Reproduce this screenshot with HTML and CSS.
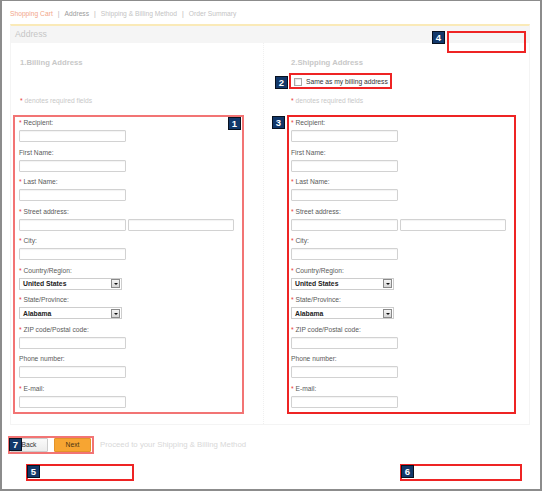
FILE: index.html
```html
<!DOCTYPE html>
<html lang="en">
<head>
    <meta charset="UTF-8">
    <meta name="viewport" content="width=device-width, initial-scale=1.0">
    <title>Checkout - Address</title>
    <link rel="stylesheet" href="styles.css">
</head>
<body>
    <div class="frame">
        <!-- Pasos -->
        <div class="crumbs">
            <span class="step done">Shopping Cart</span><span class="sep">|</span><span class="step current">Address</span><span class="sep">|</span><span class="step">Shipping &amp; Billing Method</span><span class="sep">|</span><span class="step">Order Summary</span>
        </div>

        <div class="panel">
            <div class="panel-head">Address</div>
            <div class="panel-body">
                <!-- Facturación -->
                <div class="col col-bill">
                    <div class="title">1.Billing Address</div>
                    <div class="same-spacer"></div>
                    <div class="req"><span class="star">*</span> denotes required fields</div>
                    <div class="fields mark mark-soft">
                        <span class="badge badge-1">1</span>
                        <div class="field"><label><span class="star">*</span> Recipient:</label><input type="text"></div>
                        <div class="field"><label>First Name:</label><input type="text"></div>
                        <div class="field"><label><span class="star">*</span> Last Name:</label><input type="text"></div>
                        <div class="field"><label><span class="star">*</span> Street address:</label><div class="pair"><input type="text"><input type="text" class="wide"></div></div>
                        <div class="field"><label><span class="star">*</span> City:</label><input type="text"></div>
                        <div class="field"><label><span class="star">*</span> Country/Region:</label><div class="select"><span>United States</span><i class="arrow"></i></div></div>
                        <div class="field"><label><span class="star">*</span> State/Province:</label><div class="select"><span>Alabama</span><i class="arrow"></i></div></div>
                        <div class="field"><label><span class="star">*</span> ZIP code/Postal code:</label><input type="text"></div>
                        <div class="field"><label>Phone number:</label><input type="text"></div>
                        <div class="field"><label><span class="star">*</span> E-mail:</label><input type="text"></div>
                    </div>
                </div>

                <!-- Envío -->
                <div class="col col-ship">
                    <div class="title">2.Shipping Address</div>
                    <div class="same-box mark">
                        <span class="badge badge-2">2</span>
                        <span class="check"></span>
                        <span>Same as my billing address</span>
                    </div>
                    <div class="req"><span class="star">*</span> denotes required fields</div>
                    <div class="fields mark">
                        <span class="badge badge-3">3</span>
                        <div class="field"><label><span class="star">*</span> Recipient:</label><input type="text"></div>
                        <div class="field"><label>First Name:</label><input type="text"></div>
                        <div class="field"><label><span class="star">*</span> Last Name:</label><input type="text"></div>
                        <div class="field"><label><span class="star">*</span> Street address:</label><div class="pair"><input type="text"><input type="text" class="wide"></div></div>
                        <div class="field"><label><span class="star">*</span> City:</label><input type="text"></div>
                        <div class="field"><label><span class="star">*</span> Country/Region:</label><div class="select"><span>United States</span><i class="arrow"></i></div></div>
                        <div class="field"><label><span class="star">*</span> State/Province:</label><div class="select"><span>Alabama</span><i class="arrow"></i></div></div>
                        <div class="field"><label><span class="star">*</span> ZIP code/Postal code:</label><input type="text"></div>
                        <div class="field"><label>Phone number:</label><input type="text"></div>
                        <div class="field"><label><span class="star">*</span> E-mail:</label><input type="text"></div>
                    </div>
                </div>
            </div>
        </div>

        <!-- Botones -->
        <div class="actions">
            <div class="btn-box mark mark-soft">
                <span class="badge badge-7">7</span>
                <button type="button" class="btn btn-back">Back</button>
                <button type="button" class="btn btn-next">Next</button>
            </div>
            <span class="hint">Proceed to your Shipping &amp; Billing Method</span>
        </div>

        <div class="slots">
            <div class="slot slot-5 mark"><span class="badge badge-5">5</span></div>
            <div class="slot slot-6 mark"><span class="badge badge-6">6</span></div>
        </div>

        <div class="slot-4 mark"><span class="badge badge-4">4</span></div>
    </div>
</body>
</html>
```

FILE: styles.css
```css
/* Base */
body {
    margin: 0;
    background: #fff;
    font-family: 'Liberation Sans', Arial, sans-serif;
    color: #555;
}

.frame {
    position: relative;
    box-sizing: border-box;
    width: 542px;
    height: 491px;
    border: 2px solid #8c8c8c;
    border-top-width: 1px;
    overflow: hidden;
}

/* Pasos */
.crumbs {
    box-sizing: border-box;
    height: 23px;
    padding: 8px 0 0 8px;
    font-size: 6.7px;
    line-height: 10px;
    color: #c4c4c4;
}

.crumbs .done {
    color: #f2a68a;
}

.crumbs .current {
    color: #9a9a9a;
}

.crumbs .sep {
    margin: 0 5px;
    color: #b4b4b4;
}

/* Panel */
.panel {
    margin-left: 8px;
    width: 520px;
    box-sizing: border-box;
    border: 1px solid #f4f4f4;
    border-top: 2px solid #faeab8;
}

.panel-head {
    height: 17px;
    line-height: 17px;
    padding-left: 4px;
    background: #f5f5f5;
    font-size: 8.7px;
    color: #c6c6c6;
}

.panel-body {
    display: flex;
}

.col {
    padding-bottom: 10px;
}

.col-bill {
    width: 252px;
    border-right: 1px dotted #f0f0f0;
}

.col-ship {
    flex: 1;
}

.title {
    margin-top: 15px;
    line-height: 10px;
    font-size: 7.7px;
    font-weight: bold;
    color: #c8c8c8;
}

.col-bill .title,
.col-bill .req {
    padding-left: 9px;
}

.col-ship .title,
.col-ship .req {
    padding-left: 27px;
}

.same-spacer {
    margin-top: 5px;
    height: 16px;
}

.req {
    margin-top: 7px;
    line-height: 10px;
    font-size: 6.7px;
    color: #c8c8c8;
}

.star {
    color: #e83a3a;
}

/* Marcas rojas */
.mark {
    position: relative;
    box-sizing: border-box;
    border: 2px solid #ee2424;
}

.mark-soft {
    border-color: #f27474;
}

.badge {
    position: absolute;
    width: 11px;
    height: 11px;
    border: 1px solid #08111f;
    background: #12386a;
    color: #fff;
    font-size: 9.5px;
    font-weight: bold;
    line-height: 11px;
    text-align: center;
}

.badge-1 { top: 0; right: 1px; }
.badge-2 { top: 1px; left: -16px; }
.badge-3 { top: -1px; left: -17px; }
.badge-4 { top: -2px; left: -17px; }
.badge-5 { top: -1px; left: -1px; }
.badge-6 { top: -1px; left: -1px; }
.badge-7 { top: 0; left: -1px; z-index: 1; }

/* Formularios */
.fields {
    margin-top: 9px;
    padding: 0 0 4px 4px;
}

.col-bill .fields {
    margin-left: 2px;
    width: 231px;
}

.col-ship .fields {
    margin-left: 23px;
    width: 229px;
    padding-left: 2px;
}

.field {
    margin-bottom: 4.5px;
}

.field:last-child {
    margin-bottom: 0;
}

.field label {
    display: block;
    margin-bottom: 2px;
    line-height: 11px;
    font-size: 6.7px;
    color: #5a5a5a;
}

.field input {
    display: block;
    box-sizing: border-box;
    width: 107px;
    height: 12px;
    margin: 0;
    padding: 0;
    border: 1px solid #d2d2d2;
    border-radius: 1px;
    background: #fff;
    box-shadow: inset 0 1px 1px rgba(0, 0, 0, 0.05);
}

.pair {
    display: flex;
    gap: 2px;
}

.pair .wide {
    width: 106px;
}

.select {
    display: flex;
    align-items: center;
    justify-content: space-between;
    box-sizing: border-box;
    width: 103px;
    height: 12px;
    padding: 0 1px 0 3px;
    border: 1px solid #cdcdcd;
    font-size: 6.8px;
    font-weight: bold;
    color: #222;
}

.arrow {
    position: relative;
    box-sizing: border-box;
    width: 9px;
    height: 9px;
    border: 1px solid #8a8a8a;
    background: linear-gradient(#f4f4f4, #d6d6d6);
}

.arrow::after {
    content: "";
    position: absolute;
    top: 3px;
    left: 1.5px;
    border-left: 2px solid transparent;
    border-right: 2px solid transparent;
    border-top: 2px solid #111;
}

/* Misma dirección */
.same-box {
    display: flex;
    align-items: center;
    margin: 5px 0 0 25px;
    width: 103px;
    height: 16px;
    padding-left: 3px;
    font-size: 6.7px;
    color: #333;
}

.check {
    box-sizing: border-box;
    width: 8px;
    height: 8px;
    margin: 1px 4px 0 0;
    border: 1px solid #a8a8a8;
    background: #fff;
    box-shadow: inset 1px 1px 1px rgba(0, 0, 0, 0.1);
}

/* Botones */
.actions {
    display: flex;
    align-items: center;
    margin: 11px 0 0 6px;
}

.btn-box {
    display: flex;
    gap: 6px;
    padding-right: 1px;
}

.btn {
    box-sizing: border-box;
    height: 14px;
    margin: 0;
    padding: 0;
    font-family: inherit;
    font-size: 6.7px;
    color: #333;
    border-radius: 1px;
}

.btn-back {
    width: 38px;
    border: 1px solid #cccccc;
    background: linear-gradient(#fafafa, #ececec);
}

.btn-next {
    width: 37px;
    border: 1px solid #e3932a;
    background: #f7a532;
    color: #4a3412;
}

.hint {
    margin-left: 6px;
    font-size: 7.8px;
    color: #d8d8d8;
}

/* Huecos numerados */
.slots {
    display: flex;
    justify-content: space-between;
    margin-top: 10px;
    padding: 0 18px 0 24px;
}

.slot {
    height: 17px;
}

.slot-5 {
    width: 108px;
}

.slot-6 {
    width: 122px;
}

.slot-4 {
    position: absolute;
    top: 30px;
    left: 445px;
    width: 79px;
    height: 22px;
}
```
